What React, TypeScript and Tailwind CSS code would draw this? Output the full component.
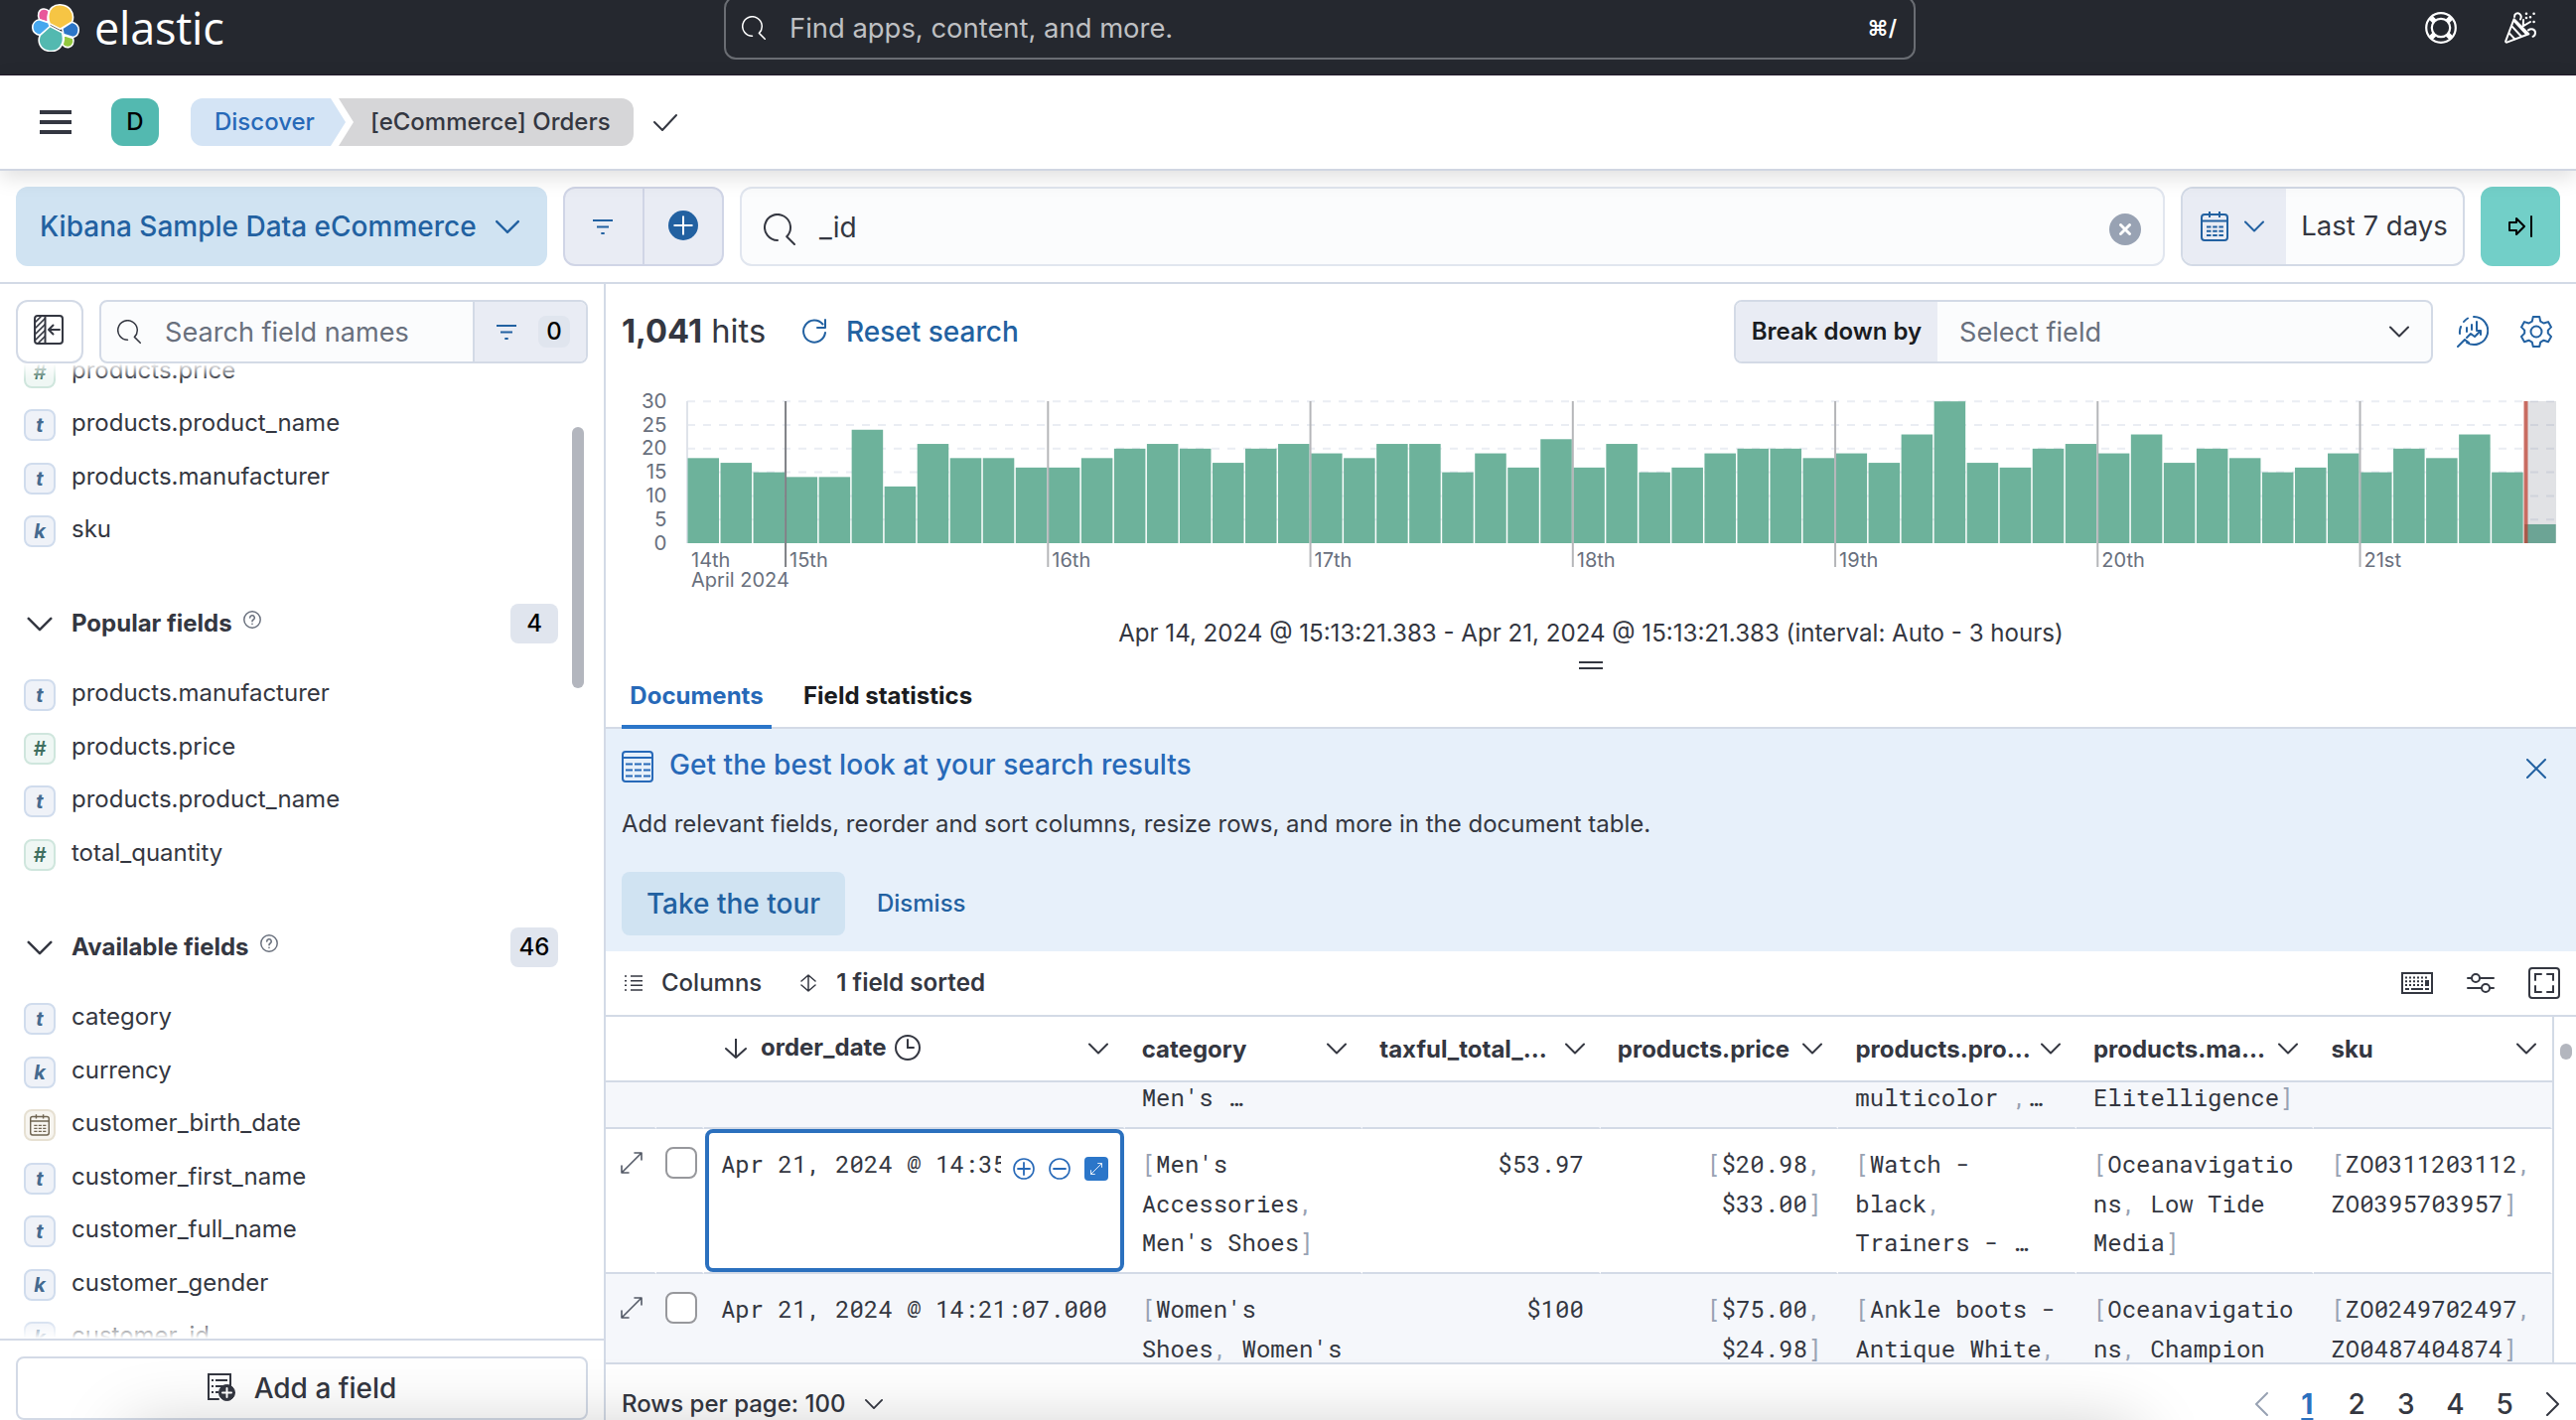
import React from "react";

type IconProps = { className?: string };

const FIELD_TOKEN = {
  text: { glyph: "t", style: "border-[#d0dced] bg-[#eff2f8] font-bold text-[#456a8f]" },
  keyword: { glyph: "k", style: "border-[#d0dced] bg-[#eff2f8] font-bold text-[#456a8f]" },
  number: { glyph: "#", style: "border-[#cfe6dd] bg-[#eff7f4] font-semibold text-[#3f6f5f]" },
  date: { glyph: "", style: "border-[#e6e0d2] bg-[#f7f5f0] text-[#6f6552]" },
};

type FieldType = keyof typeof FIELD_TOKEN;

const selectedFields: [FieldType, string][] = [
  ["number", "products.price"],
  ["text", "products.product_name"],
  ["text", "products.manufacturer"],
  ["keyword", "sku"],
];

const popularFields: [FieldType, string][] = [
  ["text", "products.manufacturer"],
  ["number", "products.price"],
  ["text", "products.product_name"],
  ["number", "total_quantity"],
];

const availableFields: [FieldType, string][] = [
  ["text", "category"],
  ["keyword", "currency"],
  ["date", "customer_birth_date"],
  ["text", "customer_first_name"],
  ["text", "customer_full_name"],
  ["keyword", "customer_gender"],
  ["keyword", "customer_id"],
];

const buckets = [
  18, 17, 15, 14, 14, 24, 12, 21, 18, 18, 16, 16, 18, 20, 21, 20, 17, 20, 21,
  19, 18, 21, 21, 15, 19, 16, 22, 16, 21, 15, 16, 19, 20, 20, 18, 19, 17, 23,
  30, 17, 16, 20, 21, 19, 23, 17, 20, 18, 15, 16, 19, 15, 20, 18, 23, 15, 4,
];

const days = ["15th", "16th", "17th", "18th", "19th", "20th", "21st"];

const columns = [
  { name: "category", numeric: false },
  { name: "taxful_total_…", numeric: true },
  { name: "products.price", numeric: true },
  { name: "products.pro…", numeric: false },
  { name: "products.ma…", numeric: false },
  { name: "sku", numeric: false },
];

const rows = [
  {
    date: "",
    selected: false,
    cells: [
      ["", "", "Men's …"],
      [],
      [],
      ["", "", "multicolor ,…"],
      ["", "", "Elitelligence]"],
      [],
    ],
  },
  {
    date: "Apr 21, 2024 @ 14:35",
    selected: true,
    cells: [
      ["[Men's", "Accessories,", "Men's Shoes]"],
      ["$53.97"],
      ["[$20.98,", "$33.00]"],
      ["[Watch -", "black,", "Trainers - …"],
      ["[Oceanavigatio", "ns, Low Tide", "Media]"],
      ["[ZO0311203112,", "ZO0395703957]"],
    ],
  },
  {
    date: "Apr 21, 2024 @ 14:21:07.000",
    selected: false,
    cells: [
      ["[Women's", "Shoes, Women's"],
      ["$100"],
      ["[$75.00,", "$24.98]"],
      ["[Ankle boots -", "Antique White,"],
      ["[Oceanavigatio", "ns, Champion"],
      ["[ZO0249702497,", "ZO0487404874]"],
    ],
  },
];

function Svg({
  className,
  children,
  box = "0 0 16 16",
}: IconProps & { children: React.ReactNode; box?: string }) {
  return (
    <svg
      viewBox={box}
      className={className}
      fill="none"
      stroke="currentColor"
      strokeLinecap="round"
      strokeLinejoin="round"
    >
      {children}
    </svg>
  );
}

function Chevron({ className }: IconProps) {
  return (
    <Svg className={className} box="0 0 20 12">
      <path strokeWidth="2" d="M1 1.5l9 9 9-9" />
    </Svg>
  );
}

function SearchIcon({ className }: IconProps) {
  return (
    <Svg className={className}>
      <path d="M7 13.5A6.5 6.5 0 1 1 11.6 11.6L15.5 15.5" />
    </Svg>
  );
}

function FilterIcon({ className }: IconProps) {
  return (
    <Svg className={className} box="0 0 20 16">
      <path strokeWidth="2" strokeLinecap="butt" d="M0 2h20M4 8.5h12M8.3 15h3.4" />
    </Svg>
  );
}

function CalendarIcon({ className }: IconProps) {
  return (
    <Svg className={className} box="0 0 28 30">
      <rect x="1" y="3" width="26" height="26" rx="3" strokeWidth="2" />
      <path strokeWidth="2" strokeLinecap="butt" d="M1 9.5h26M9 0v6M19 0v6" />
      <path
        strokeWidth="2"
        strokeLinecap="butt"
        strokeDasharray="4.5 1.7"
        d="M6 15.5h17M6 19.7h17M6 23.9h17"
      />
    </Svg>
  );
}

function HelpTip() {
  return (
    <Svg className="mb-2 ml-[11px] h-[18px] w-[18px] text-[#69707d]">
      <circle cx="8" cy="8" r="7.3" strokeWidth="1.3" />
      <path
        strokeWidth="1.4"
        d="M6 6.3a2 2 0 1 1 3 1.7c-.7.4-1 .7-1 1.5M8 11.8v.1"
      />
    </Svg>
  );
}

function ExpandIcon({ className }: IconProps) {
  return (
    <Svg className={className} box="0 0 22 22">
      <path strokeWidth="1.6" d="M14 1h7v7M8 21H1v-7M20.5 1.5l-19 19" />
    </Svg>
  );
}

function ElasticMark() {
  return (
    <svg viewBox="0 0 48 48" className="h-12 w-12">
      <g stroke="#fff" strokeWidth="1.6" strokeLinejoin="round">
        <path fill="#e8589b" d="M17.500 7.500C14.500 4 9 4 7 8.500c-1 3-.5 5 .5 7.200l9 2.800c-1-4-.5-7.500 1-11z" />
        <path fill="#f6c544" d="M28.700 25.300l-10.700-5.500C15.800 14 16.300 7 20.500 3.400 25.500-.8 35 .3 38.800 5.500c3.200 4.300 3.300 9 1.700 12.700z" />
        <path fill="#47a7ee" d="M7.500 15.700l9.200 3 1.600 3.900-9.800 8.900C3.500 30.500.7 27.500.8 23.400c0-3.700 2.700-7 6.700-7.700z" />
        <path fill="#2c76c8" d="M40.300 18.300c4.400 1 7 4.300 6.900 8.200-.1 3.500-2.500 6.300-5.800 7.100l-9.500-3.200-1.200-5.900z" />
        <path fill="#53b9b0" d="M18.500 22.500l12 6.200c2.300 7.300.5 14.300-5 17.400-6.300 3.300-14.500 1-17.300-5-1.500-3.300-1.200-7 .2-9.800z" />
        <path fill="#93c83e" d="M32.200 31.500l9.300 2.900c1.600 4.300-.5 8.600-4.500 9.200-2.300.3-4.500-.5-6-2.500 1.500-3.300 1.800-6.400 1.200-9.600z" />
      </g>
    </svg>
  );
}

function TopBar() {
  return (
    <header className="-mt-5 flex h-24 shrink-0 items-center border-b border-[#231a2b] bg-[#25282f] pr-10 pl-8 text-white">
      <ElasticMark />
      <span className="ml-[15px] w-[618px] pt-px font-['Open_Sans','Noto_Sans',sans-serif] text-[45px] leading-[60px] tracking-[-0.005em]">
        elastic
      </span>
      <div className="ml-4 flex h-16 w-[1200px] items-center rounded-xl border-2 border-[#6a6d73] px-4">
        <SearchIcon className="h-6 w-6" />
        <span className="mt-0.5 ml-6 flex-1 text-[27.4px] text-[#bfc0c3]">
          Find apps, content, and more.
        </span>
        <span className="mt-0.5 mr-px text-[22px] font-semibold">⌘/</span>
      </div>
      <div className="ml-auto flex gap-12">
        <Svg className="h-8 w-8">
          <circle cx="8" cy="8" r="7.4" strokeWidth="1.1" />
          <circle cx="8" cy="8" r="4.600" strokeWidth="1.1" />
          <path
            strokeWidth="2.600"
            strokeLinecap="butt"
            d="M4.800 4.800L3 3M11.200 4.800L13 3M4.800 11.200L3 13M11.200 11.200L13 13"
          />
        </Svg>
        <Svg className="h-8 w-8">
          <path d="M4.800 3.600L.6 14.700c-.1.400.2.700.6.600l11-4.200zM3.700 7.200l4.800 5.200M2.400 10.700l2.900 3.100M5.300 5l5.900 6.400" />
          <path d="M5 2.500C5 .8 6.500.3 7.600 1c1 .8.9 1.800.4 2.700M9.300 7.200L13 5M9.400 7l.1-3M12 9.200c1.500-1.200 3.500-.4 3.500 1.300 0 1-.5 1.600-1.200 1.900" />
          <path strokeWidth="1.300" d="M11 .9v0M14.800.9v0M11 3v0M13 2.600v0M14.800 5v0" />
        </Svg>
      </div>
    </header>
  );
}

function Breadcrumbs() {
  return (
    <nav className="relative z-10 flex h-24 shrink-0 items-center border-b-2 border-[#d0d6e2] bg-white pl-10 shadow-[0_6px_20px_rgba(0,0,0,0.13)]">
      <div className="flex flex-col gap-1.5">
        <div className="h-1 w-8 bg-[#343741]" />
        <div className="h-1 w-8 bg-[#343741]" />
        <div className="h-1 w-8 bg-[#343741]" />
      </div>
      <div className="ml-10 flex h-12 w-12 items-center justify-center rounded-xl bg-[#53b9b0] text-2xl font-medium text-black">
        D
      </div>
      <div className="ml-8 flex h-12 w-[156px] items-center rounded-l-xl bg-[#d4e4f5] pl-6 text-2xl font-medium text-[#2769b8] [clip-path:polygon(0_0,141px_0,100%_50%,141px_100%,0_100%)]">
        Discover
      </div>
      <div className="-ml-[7px] flex h-12 w-[297px] items-center rounded-r-xl bg-[#d6d6d8] pl-8 text-2xl font-medium whitespace-nowrap text-[#343741] [clip-path:polygon(0_0,100%_0,100%_100%,0_100%,15px_50%)]">
        [eCommerce] Orders
      </div>
      <Svg className="ml-5 h-5 w-6 text-[#343741]" box="0 0 24 20">
        <path strokeWidth="2" d="M1 10l8 8L23 3" />
      </Svg>
    </nav>
  );
}

function QueryBar() {
  return (
    <div className="flex h-[114px] shrink-0 items-center gap-4 border-b-2 border-[#d3dae6] px-4">
      <button className="flex h-20 w-[535px] items-center justify-between rounded-xl bg-[#d0e3f2] pr-7 pl-6 text-[28px] font-medium text-[#2261a1]">
        Kibana Sample Data eCommerce
        <Chevron className="h-[15px] w-6" />
      </button>
      <div className="flex h-20 w-[162px] rounded-xl border-2 border-[#d0d5e6] bg-[#e9ecf4] text-[#2261a1]">
        <div className="flex flex-1 items-center justify-center border-r-2 border-[#d0d5e6]">
          <FilterIcon className="mr-0.5 h-4 w-5" />
        </div>
        <div className="flex flex-1 items-center justify-center">
          <div className="mb-0.5 flex h-[30px] w-[30px] items-center justify-center rounded-full bg-[#2261a1] text-white">
            <Svg className="h-5 w-5">
              <path strokeWidth="1.600" d="M8 1v14M1 8h14" />
            </Svg>
          </div>
        </div>
      </div>
      <div className="flex h-20 flex-1 items-center rounded-xl border-2 border-[#e1e6ef] bg-[#fbfcfd] pr-[22px] pl-[22px]">
        <SearchIcon className="mt-1.5 h-8 w-8 text-[#343741]" />
        <span className="mt-0.5 ml-6 flex-1 text-[28px] text-[#343741]">_id</span>
        <div className="mt-1.5 flex h-8 w-8 items-center justify-center rounded-full bg-[#98a2b3] text-white">
          <Svg className="h-3 w-3">
            <path strokeWidth="3.800" d="M2 2l12 12M14 2L2 14" />
          </Svg>
        </div>
      </div>
      <div className="flex h-20 w-[286px] overflow-hidden rounded-xl border-2 border-[#d3dae6] bg-[#fbfcfd]">
        <div className="flex w-[104px] items-center gap-4 bg-[#e9ecf4] pl-[18px] text-[#2261a1]">
          <CalendarIcon className="h-[30px] w-7" />
          <Chevron className="h-3 w-5" />
        </div>
        <span className="flex flex-1 items-center justify-center text-[27.5px] whitespace-nowrap text-[#343741]">
          Last 7 days
        </span>
      </div>
      <button className="flex h-20 w-20 items-center justify-center rounded-xl bg-[#72cfc8] text-black">
        <Svg className="h-6 w-6" box="0 0 24 24">
          <path strokeWidth="2" d="M1 8h7V4l8 8-8 8v-4H1zM23 2v20" />
        </Svg>
      </button>
    </div>
  );
}

function FieldRow({ type, name }: { type: FieldType; name: string }) {
  const token = FIELD_TOKEN[type];
  return (
    <div className="flex h-[53.5px] items-start">
      <div
        className={`flex h-8 w-8 shrink-0 items-center justify-center rounded-lg border-2 text-[20px] leading-none italic ${token.style}`}
      >
        {type === "date" ? <CalendarIcon className="h-[22px] w-5" /> : token.glyph}
      </div>
      <span className="ml-4 text-2xl leading-[28.5px] text-[#343741]">{name}</span>
    </div>
  );
}

function SectionHeading({ title, count }: { title: string; count: number }) {
  return (
    <div className="flex h-10 items-center">
      <Chevron className="ml-[3px] h-[15px] w-[26px] text-[#343741]" />
      <span className="ml-[19px] text-2xl font-bold text-[#343741]">{title}</span>
      <HelpTip />
      <span className="ml-auto flex h-10 w-12 items-center justify-center rounded-lg bg-[#e0e5ee] text-2xl font-medium text-black">
        {count}
      </span>
    </div>
  );
}

function Sidebar() {
  return (
    <aside className="flex w-[610px] shrink-0 flex-col border-r-2 border-[#d3dae6]">
      <div className="flex h-20 shrink-0 gap-4 px-4 pt-4">
        <div className="flex h-16 w-[68px] items-center justify-center rounded-xl border-2 border-[#d3dae6]">
          <Svg className="mr-0.5 mb-1 h-[30px] w-[30px] text-[#343741]" box="0 0 30 30">
            <rect x="1" y="1" width="28" height="28" rx="3" strokeWidth="2" />
            <path strokeWidth="2" d="M11.500 1v28M26 15H15.500M19.500 10.500L15 15l4.500 4.500" />
            <path strokeWidth="1.700" d="M2 7l5-5M2 13l9-9M2 19l9-9M2 25l9-9M5 28l6-6" />
          </Svg>
        </div>
        <div className="flex h-16 flex-1 overflow-hidden rounded-lg border-2 border-[#d3dae6] bg-[#fbfcfd]">
          <div className="flex w-[376px] items-center border-r-2 border-[#d3dae6] pl-4">
            <SearchIcon className="h-6 w-6 text-[#343741]" />
            <span className="mt-0.5 ml-6 text-[27.1px] text-[#69707d]">Search field names</span>
          </div>
          <div className="flex flex-1 items-center bg-[#e9ecf4] pl-[22px]">
            <FilterIcon className="h-4 w-5 text-[#2261a1]" />
            <span className="ml-[22px] flex h-8 w-8 items-center justify-center rounded-lg bg-[#e0e5ee] text-2xl font-medium text-black">
              0
            </span>
          </div>
        </div>
      </div>
      <div className="relative h-[982px] shrink-0 overflow-hidden">
        <div className="-mt-[7.5px] pr-[46px] pl-6">
          {selectedFields.map(([type, name]) => (
            <FieldRow key={name} type={type} name={name} />
          ))}
          <div className="mt-[35.5px] mb-9">
            <SectionHeading title="Popular fields" count={4} />
          </div>
          {popularFields.map(([type, name]) => (
            <FieldRow key={name} type={type} name={name} />
          ))}
          <div className="mt-9 mb-9">
            <SectionHeading title="Available fields" count={46} />
          </div>
          {availableFields.map(([type, name]) => (
            <FieldRow key={name} type={type} name={name} />
          ))}
        </div>
        <div className="absolute inset-x-0 top-0 h-4 bg-gradient-to-b from-white to-transparent" />
        <div className="absolute inset-x-0 bottom-0 h-5 bg-gradient-to-t from-white to-transparent" />
        <div className="absolute top-16 right-5 h-[263px] w-3 rounded-full bg-[#b3b6be]" />
      </div>
      <div className="shrink-0 border-t-2 border-[#d3dae6] px-4 pt-4">
        <button className="flex h-16 w-full items-center justify-center gap-[19px] rounded-lg border-2 border-[#d3dae6] text-[28px] font-medium text-[#343741]">
          <Svg className="h-8 w-7" box="0 0 28 32">
            <path strokeWidth="2" strokeLinejoin="miter" d="M23 17V2H1v25h10" />
            <path strokeWidth="2" strokeLinecap="butt" d="M4 8h2M8 8h12M4 14h2M8 14h10M4 20h2M8 20h3" />
            <circle cx="19.500" cy="20.500" r="8" fill="currentColor" strokeWidth="1" />
            <path stroke="#fff" strokeWidth="2" d="M19.500 16v9M15 20.500h9" />
          </Svg>
          Add a field
        </button>
      </div>
    </aside>
  );
}

function HitsHeader() {
  return (
    <div className="flex h-20 shrink-0 items-center px-4 pt-4">
      <span className="w-[143px] text-[32.7px] whitespace-nowrap text-[#343741]">
        <b>1,041</b> hits
      </span>
      <Svg className="ml-[39px] h-[26px] w-6 text-[#2261a1]" box="0 0 24 26">
        <path strokeWidth="2" d="M23 1v8h-8M20.500 5.500A11 11 0 1 0 23 14" />
      </Svg>
      <span className="ml-5 text-[28px] font-medium text-[#2261a1]">Reset search</span>
      <div className="ml-auto flex h-16 w-[704px] items-center overflow-hidden rounded-lg border-2 border-[#d3dae6] bg-[#fbfcfd]">
        <span className="flex h-full w-[203px] items-center justify-center bg-[#e9ecf4] text-2xl font-semibold text-[#1a1c21]">
          Break down by
        </span>
        <span className="mt-0.5 ml-[22px] flex-1 text-[27.1px] text-[#69707d]">Select field</span>
        <Chevron className="mr-[22px] h-3 w-5 text-[#343741]" />
      </div>
      <Svg className="ml-6 h-8 w-8 text-[#2261a1]" box="0 0 32 32">
        <path strokeWidth="2" d="M17 1a14 14 0 1 1-7 26M1 31l7-7M8 24l4 3M3 18a14 14 0 0 1 1-7M7 6a14 14 0 0 1 4-3.500" />
        <path strokeWidth="2" d="M10 12v4M15 9v5M20 6v8M10 22l4-4 4 3 6-6M24 19v-4h-4" />
      </Svg>
      <Svg className="mr-2 ml-8 h-8 w-8 text-[#2261a1]" box="0 0 32 32">
        <circle cx="16" cy="16" r="5.500" strokeWidth="2" />
        <path
          strokeWidth="2"
          d="M12.800 1h6.400l1 4.600 3.300 1.900 4.500-1.400 3 5.300-3.200 3.200v3l3.200 3.300-3 5.300-4.500-1.500-3.300 2-1 4.300h-6.400l-1-4.400-3.300-1.900L4 26.200l-3-5.300 3.200-3.300v-3L1 11.400l3-5.300 4.500 1.400 3.300-1.900z"
        />
      </Svg>
    </div>
  );
}

function Histogram() {
  const left = 82;
  const base = 181;
  const step = 33.03;
  const unit = 4.76;
  return (
    <svg width="1984" height="244" className="shrink-0 font-['Inter']">
      {[0, 5, 10, 15, 20, 25, 30].map((tick) => (
        <g key={tick}>
          {tick > 0 && (
            <line
              x1={left}
              x2="1964"
              y1={base - tick * unit}
              y2={base - tick * unit}
              stroke="#eaedf3"
              strokeWidth="2"
              strokeDasharray="8 8"
            />
          )}
          <text x="61.500" y={base - tick * unit + 6.5} textAnchor="end" fontSize="20.500" fill="#69707d">
            {tick}
          </text>
        </g>
      ))}
      <line x1={left} x2={left} y1="38" y2={base} stroke="#dfe3ea" strokeWidth="2" />
      {buckets.map((count, i) => (
        <rect
          key={i}
          x={left + i * step + 0.5}
          y={base - count * unit}
          width={step - 1.5}
          height={count * unit}
          fill="#6db29b"
        />
      ))}
      {days.map((day, i) => (
        <g key={day}>
          <line
            x1={left + (3 + i * 8) * step}
            x2={left + (3 + i * 8) * step}
            y1="38"
            y2="205"
            stroke={i === 0 ? "#7d7f84" : "#b5b6b9"}
            strokeWidth="2"
          />
          <text x={left + (3 + i * 8) * step + 4} y="204.500" fontSize="20" fill="#69707d">
            {day}
          </text>
        </g>
      ))}
      <text x="86" y="204.500" fontSize="20" fill="#69707d">
        14th
      </text>
      <text x="86" y="224.500" fontSize="20" fill="#69707d">
        April 2024
      </text>
      <rect x="1932" y="38" width="32" height="143" fill="#696f7d" fillOpacity="0.2" />
      <rect x="1931.500" y="38" width="4" height="143" fill="#bd3a2b" fillOpacity="0.7" />
    </svg>
  );
}

function Callout() {
  return (
    <section className="h-56 shrink-0 bg-[#e7f0fa] pt-[18px] pr-6 pl-4">
      <div className="flex h-9 items-center">
        <Svg className="mt-1 h-8 w-8 text-[#2769b8]" box="0 0 32 32">
          <rect x="1" y="1" width="30" height="30" rx="3" strokeWidth="2" />
          <path strokeWidth="2" d="M1 7h30" />
          <path
            strokeWidth="2"
            strokeLinecap="butt"
            strokeDasharray="7 2"
            d="M4 13.500h25M4 19.500h25M4 25.500h25"
          />
        </Svg>
        <span className="ml-4 text-[28.1px] font-medium text-[#2769b8]">
          Get the best look at your search results
        </span>
        <Svg className="mt-2 mr-1.5 ml-auto h-5 w-5 text-[#2261a1]" box="0 0 20 20">
          <path strokeWidth="2" d="M1 1l18 18M19 1L1 19" />
        </Svg>
      </div>
      <p className="mt-6 text-2xl leading-9 text-[#343741]">
        Add relevant fields, reorder and sort columns, resize rows, and more in the document table.
      </p>
      <div className="mt-[30px] flex items-center">
        <button className="h-16 w-[225px] rounded-lg bg-[#d0e3f2] text-[28px] font-medium text-[#2261a1]">
          Take the tour
        </button>
        <span className="ml-8 text-2xl font-medium text-[#2261a1]">Dismiss</span>
      </div>
    </section>
  );
}

function GridToolbar() {
  return (
    <div className="flex h-[66px] shrink-0 items-center border-b-2 border-[#d3dae6] px-4 text-2xl text-[#343741]">
      <Svg className="ml-[3px] h-4 w-[18px]" box="0 0 18 16">
        <path
          strokeWidth="1.500"
          strokeLinecap="butt"
          d="M0 1h2M0 5.700h2M0 10.300h2M0 15h2M6 1h12M6 5.700h12M6 10.300h12M6 15h12"
        />
      </Svg>
      <span className="ml-[19px] font-medium">Columns</span>
      <Svg className="ml-[39px] h-[18px] w-4" box="0 0 16 18">
        <path strokeWidth="1.500" d="M8 1v16M1 7l7-6 7 6M1 11l7 6 7-6" />
      </Svg>
      <span className="ml-5 text-[24.2px] font-semibold">1 field sorted</span>
      <Svg className="ml-auto h-[22px] w-8" box="0 0 32 22">
        <rect x="1" y="1" width="30" height="20" strokeWidth="2" strokeLinejoin="miter" />
        <path
          strokeWidth="2"
          strokeLinecap="butt"
          strokeDasharray="2 2"
          d="M4 5.500h24M4 9.300h20M4 13h20"
        />
        <path strokeWidth="2" strokeLinecap="butt" d="M4 17h4M10 17h12M24 17h4" />
        <path strokeWidth="4" strokeLinecap="butt" d="M26 8v6" />
      </Svg>
      <Svg className="ml-[34px] h-5 w-7" box="0 0 28 20">
        <circle cx="9" cy="5" r="4" strokeWidth="2" />
        <circle cx="19" cy="15" r="4" strokeWidth="2" />
        <path strokeWidth="2" d="M1 5h4M13 5h14M1 15h14M23 15h4" />
      </Svg>
      <Svg className="ml-[34px] h-8 w-8" box="0 0 32 32">
        <rect x="1" y="1" width="30" height="30" rx="3" strokeWidth="2" />
        <path
          strokeWidth="2"
          strokeLinejoin="miter"
          d="M7 13V7h6M19 7h6v6M25 19v6h-6M13 25H7v-6"
        />
      </Svg>
    </div>
  );
}

// brackets and separators of multi-value fields are dimmed
function CellLine({ text }: { text: string }) {
  return (
    <div className="h-[39.6px] whitespace-pre">
      {text.split(/([\[\],])/).map((part, i) => (
        <span key={i} className={i % 2 ? "text-[#98a2b3]" : ""}>
          {part}
        </span>
      ))}
    </div>
  );
}

function DateCell({ date, selected }: { date: string; selected: boolean }) {
  if (!selected) {
    return (
      <div className="w-[424px] border-r-2 border-b-2 border-[#d3dae6] border-r-transparent pt-4 pl-[17px] whitespace-nowrap">
        {date}
      </div>
    );
  }
  return (
    <div className="w-[424px] border-b-2 border-[#d3dae6]">
      <div className="ml-px flex h-[144px] w-[422px] items-start rounded-lg border-4 border-[#2b70be] pt-3 pl-[12px]">
        <span className="w-[282px] overflow-hidden whitespace-nowrap">{date}</span>
        <div className="mt-3 ml-3 flex items-center gap-3.5 text-[#2769b8]">
          <Svg className="h-[22px] w-[22px]" box="0 0 22 22">
            <circle cx="11" cy="11" r="10" strokeWidth="1.600" />
            <path strokeWidth="1.800" d="M11 5v12M5 11h12" />
          </Svg>
          <Svg className="h-[22px] w-[22px]" box="0 0 22 22">
            <circle cx="11" cy="11" r="10" strokeWidth="1.600" />
            <path strokeWidth="1.800" d="M5 11h12" />
          </Svg>
          <div className="flex h-6 w-6 items-center justify-center rounded bg-[#2b76c9] text-white">
            <ExpandIcon className="h-3 w-3" />
          </div>
        </div>
      </div>
    </div>
  );
}

function DataGrid() {
  return (
    <div className="flex h-[350px] shrink-0 border-b-2 border-[#d3dae6]">
      <div className="flex w-[1962px] flex-col overflow-hidden border-r-2 border-[#d3dae6]">
        <div className="z-10 flex h-[66px] shrink-0 items-center border-b-2 border-[#d3dae6] bg-white text-2xl font-bold text-[#343741]">
          <div className="flex w-[523px] items-center pr-[17px] pl-[120px]">
            <Svg className="h-5 w-[22px]" box="0 0 22 20">
              <path strokeWidth="2" d="M11 0v19M1 10l10 9 10-9" />
            </Svg>
            <span className="mb-[3px] ml-3.5">order_date</span>
            <Svg className="mb-0.5 ml-[9px] h-[26px] w-[26px]" box="0 0 26 26">
              <circle cx="13" cy="13" r="12" strokeWidth="2" />
              <path strokeWidth="2" strokeLinejoin="miter" d="M13 5v8h6" />
            </Svg>
            <Chevron className="ml-auto h-3 w-5" />
          </div>
          {columns.map(({ name }) => (
            <div key={name} className="flex w-[239.7px] items-center justify-between pr-4 pl-[17px]">
              <span className="pt-0.5">{name}</span>
              <Chevron className="h-3 w-5" />
            </div>
          ))}
        </div>
        <div className="-mt-[99px] font-['Roboto_Mono','Liberation_Mono',monospace] text-2xl leading-[39.6px] text-[#343741]">
          {rows.map(({ date, selected, cells }, i) => (
            <div key={i} className={`flex h-[146px] ${selected ? "bg-white" : "bg-[#f5f7fb]"}`}>
              <div className="w-[51px] border-r-2 border-b-2 border-[#d3dae6] border-r-transparent pt-[23px] pl-[15px]">
                <ExpandIcon className="h-[22px] w-[22px] text-[#535966]" />
              </div>
              <div className="w-12 border-r-2 border-b-2 border-[#d3dae6] border-r-transparent pt-[18px] pl-[9px]">
                <div className="h-8 w-8 rounded-lg border-2 border-[#97989c] bg-white" />
              </div>
              <DateCell date={date} selected={selected} />
              {cells.map((lines, c) => (
                <div
                  key={c}
                  className={`w-[239.7px] border-r-2 border-b-2 border-[#d3dae6] border-r-transparent pt-4 pr-[15px] pl-[17px] ${
                    columns[c].numeric ? "text-right" : ""
                  }`}
                >
                  {lines.map((line, n) => (
                    <CellLine key={n} text={line} />
                  ))}
                </div>
              ))}
            </div>
          ))}
        </div>
      </div>
      <div className="mt-[27px] ml-1.5 h-4 w-3 rounded-full bg-[#b3b6be]" />
    </div>
  );
}

function Pagination() {
  return (
    <footer className="flex h-20 shrink-0 items-center px-4 text-[#343741]">
      <span className="text-2xl font-medium">Rows per page: 100</span>
      <Chevron className="ml-5 h-3 w-[18px]" />
      <div className="ml-auto flex items-center text-[28px] font-medium">
        <Svg className="mr-[15px] h-6 w-3.5 text-[#98a2b3]" box="0 0 14 24">
          <path strokeWidth="2" d="M13 1L2 12l11 11" />
        </Svg>
        <span className="w-[49.7px] text-center font-bold text-[#2b70be] underline underline-offset-4">1</span>
        <span className="w-[49.7px] text-center">2</span>
        <span className="w-[49.7px] text-center">3</span>
        <span className="w-[49.7px] text-center">4</span>
        <span className="w-[49.7px] text-center">5</span>
        <Svg className="ml-[17px] h-6 w-3.5" box="0 0 14 24">
          <path strokeWidth="2" d="M1 1l11 11L1 23" />
        </Svg>
      </div>
    </footer>
  );
}

export default function App() {
  return (
    <div className="relative flex h-[1430px] w-[2594px] flex-col overflow-hidden bg-white font-['Inter',sans-serif]">
      <TopBar />
      <Breadcrumbs />
      <QueryBar />
      <div className="flex min-h-0 flex-1">
        <Sidebar />
        <main className="flex min-w-0 flex-1 flex-col overflow-hidden">
          <HitsHeader />
          <Histogram />
          <div className="flex h-[72px] shrink-0 flex-col items-center pt-2 text-[24.1px] text-[#343741]">
            <span className="leading-10">
              Apr 14, 2024 @ 15:13:21.383 - Apr 21, 2024 @ 15:13:21.383 (interval: Auto - 3 hours)
            </span>
            <div className="mt-2 h-2 w-6 border-y-2 border-[#343741]" />
          </div>
          <div className="flex h-[52px] shrink-0 border-b-2 border-[#d3dae6] pl-4 text-2xl font-bold">
            <div className="z-10 h-[52px] w-[151px] border-b-4 border-[#2b76c9] pt-[3px] text-center text-[#2769b8]">
              Documents
            </div>
            <div className="ml-8 pt-[3px] text-[#1a1c21]">Field statistics</div>
          </div>
          <Callout />
          <GridToolbar />
          <DataGrid />
          <Pagination />
        </main>
      </div>
      <div className="pointer-events-none absolute top-[1440px] left-[130px] h-20 w-[2020px] shadow-[0_0_70px_rgba(0,0,0,0.22)]" />
    </div>
  );
}
